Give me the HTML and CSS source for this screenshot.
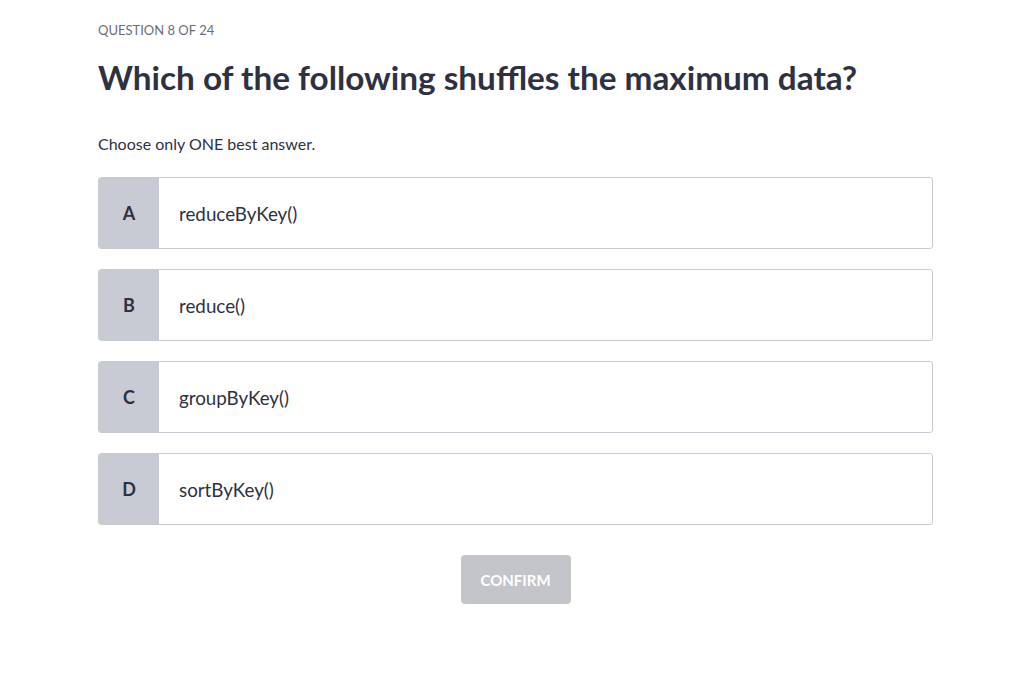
FILE: index.html
```html
<!DOCTYPE html>
<html>
<head>
<meta charset="utf-8">
<link rel="stylesheet" href="styles.css">
</head>
<body>
<main class="quiz">
  <div class="counter">QUESTION 8 OF 24</div>
  <h1 class="title">Which of the following shuffles the maximum data?</h1>
  <p class="hint">Choose only ONE best answer.</p>
  <div class="options">
    <div class="option"><div class="letter">A</div><div class="text">reduceByKey()</div></div>
    <div class="option"><div class="letter">B</div><div class="text">reduce()</div></div>
    <div class="option"><div class="letter">C</div><div class="text">groupByKey()</div></div>
    <div class="option"><div class="letter">D</div><div class="text">sortByKey()</div></div>
  </div>
  <div class="actions"><button class="confirm">CONFIRM</button></div>
</main>
</body>
</html>
```
FILE: styles.css
```css
html, body { margin: 0; padding: 0; background: #fff; }
body { font-family: Lato, "Open Sans", sans-serif; color: #2e3142; }
.quiz { width: 835px; margin: 0 0 0 98px; padding-top: 21px; }
.counter { font-size: 13px; color: #6d6d7a; line-height: 18px; }
.title { font-size: 33.3px; font-weight: 700; margin: 17px 0 0 0; line-height: 42px; color: #2e3142; }
.hint { font-size: 16px; margin: 35px 0 0 0; line-height: 22px; color: #2e3142; }
.options { display: flex; flex-direction: column; gap: 20px; margin-top: 22px; }
.option { display: flex; height: 70px; border: 1px solid #c8cbd4; border-radius: 3px; overflow: hidden; }
.letter { width: 60px; background: #c8cbd4; display: flex; align-items: center; justify-content: center; font-size: 18px; font-weight: 700; color: #2e3142; }
.text { display: flex; align-items: center; padding-left: 20px; font-size: 18.8px; color: #2e3142; }
.actions { display: flex; justify-content: center; margin-top: 30px; }
.confirm { width: 110px; height: 49px; border: none; border-radius: 4px; background: #c4c5ca; color: #fff; font-family: Lato, sans-serif; font-weight: 700; font-size: 15px; padding: 0; }
```
